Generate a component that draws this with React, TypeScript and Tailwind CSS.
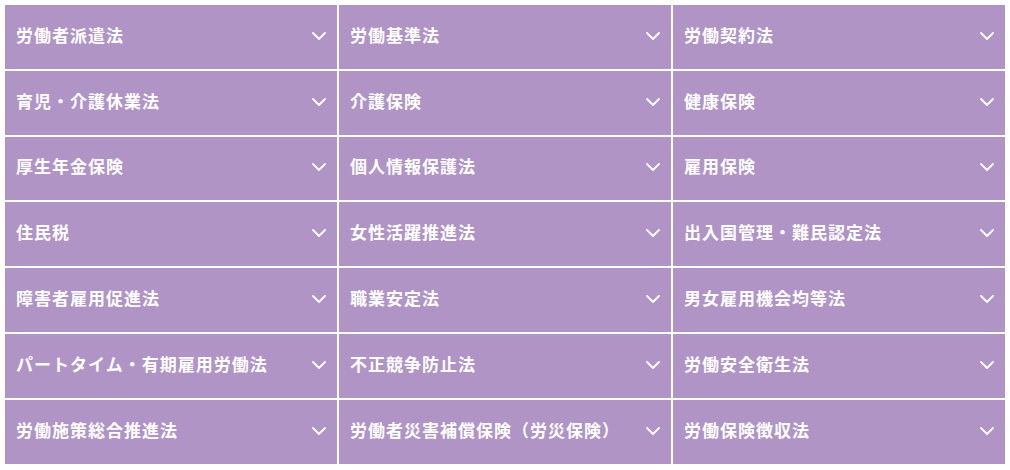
const items = [
  "労働者派遣法",
  "労働基準法",
  "労働契約法",
  "育児・介護休業法",
  "介護保険",
  "健康保険",
  "厚生年金保険",
  "個人情報保護法",
  "雇用保険",
  "住民税",
  "女性活躍推進法",
  "出入国管理・難民認定法",
  "障害者雇用促進法",
  "職業安定法",
  "男女雇用機会均等法",
  "パートタイム・有期雇用労働法",
  "不正競争防止法",
  "労働安全衛生法",
  "労働施策総合推進法",
  "労働者災害補償保険（労災保険）",
  "労働保険徴収法",
];

const Chevron = () => (
  <svg width="14" height="8" viewBox="0 0 14 8" fill="none" className="shrink-0 mb-[2px]">
    <polyline points="1,1 7,7 13,1" stroke="white" strokeWidth="1.8" strokeLinecap="round" strokeLinejoin="round" />
  </svg>
);

export default function App() {
  return (
    <div className="w-[1010px] h-[470px] bg-white p-[5px]" style={{ fontFamily: '"Noto Sans CJK JP", "Noto Sans", sans-serif' }}>
      <div className="grid grid-cols-3 gap-[2px] w-[1000px]">
        {items.map((label) => (
          <button
            key={label}
            className="h-[63.8px] bg-[#b094c6] flex items-center justify-between pl-[11px] pr-[11px] text-left"
          >
            <span className="text-white font-bold text-[17px] tracking-[1px] leading-none pb-[5px]">{label}</span>
            <Chevron />
          </button>
        ))}
      </div>
    </div>
  );
}
